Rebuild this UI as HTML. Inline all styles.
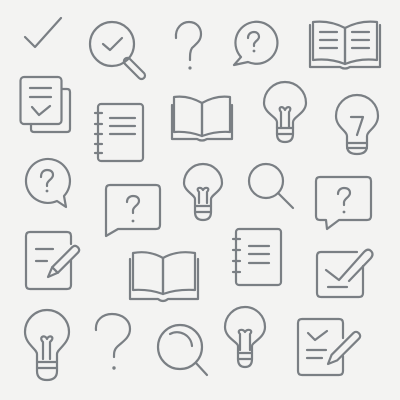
<!DOCTYPE html>
<html><head><meta charset="utf-8"><style>
html,body{margin:0;padding:0;background:#f3f3f2;}
svg{display:block}
</style></head><body>
<svg width="400" height="400" viewBox="0 0 400 400" xmlns="http://www.w3.org/2000/svg">
<rect width="400" height="400" fill="#f3f3f2"/>
<g fill="none" stroke="#7a7f84" stroke-width="2.2" stroke-linecap="round" stroke-linejoin="round">
<!-- 1 check -->
<polyline points="25,37 35,47 61,18"/>
<!-- 2 magnifier check -->
<circle cx="112" cy="44" r="22"/>
<rect x="-3" y="-3.5" width="27" height="7" rx="3.5" transform="translate(127,61) rotate(45)"/>
<polyline points="103,44 110,50 122,38"/>
<!-- 3 question -->
<path d="M176,38 C175,28 182,22 189,22 C197,22 201,28 201,34 C201,41 196,44 192,48 C190,51 190,55 190,60"/>
<!-- 4 round bubble -->
<path d="M241,57 L234,65 L248,62 A21,21 0 1 0 241,57 Z"/>
<path d="M248,38 C248,34 251,32 254,32 C257,32 259,34 259,37 C259,40 255,41 254,44 L254,46"/>
<!-- 5 book with lines -->
<path d="M345,64 V28 Q330,20 313,22 V60 Q330,58 345,64 Z"/>
<path d="M345,64 V28 Q360,20 377,22 V60 Q360,58 345,64"/>
<path d="M310,25 V67 H340 Q345,70 350,67 H380 V25"/>
<path d="M320,32 H337 M320,40 H337 M320,48 H337 M352,32 H369 M352,40 H369 M352,48 H369"/>
<!-- 6 docs check -->
<rect x="20.5" y="77" width="41" height="47" rx="3.5"/>
<path d="M62,89 H67 Q70,89 70,92 V129 Q70,132 67,132 H34 Q31,132 31,129 V124"/>
<path d="M30,88 H51 M30,97 H51"/>
<polyline points="32,107 39,115 50,106"/>
<!-- 7 notebook -->
<rect x="98" y="104" width="45" height="57" rx="3"/>
<path d="M95,113 H102 M95,124 H102 M95,134 H102 M95,144 H102 M95,153 H102"/>
<path d="M110,118 H135 M110,126 H135 M110,134 H135"/>
<!-- 8 open book -->
<path d="M202,136 V103 Q188,95 174,97 V132 Q188,131 202,136 Z"/>
<path d="M202,136 V103 Q216,95 230,97 V132 Q216,131 202,136"/>
<path d="M172,105 V139 H197 Q202,142 207,139 H232 V105"/>
<!-- 9 bulb -->
<path d="M277,127 V122 C277,117 264,113 264,103 A21,21 0 0 1 306,103 C306,113 293,117 293,122 V127"/>
<path d="M277,127 V134 Q277,142 285,142 Q293,142 293,134 V127"/>
<path d="M277,128 H293 M277,134 H293"/>
<path d="M281,127 V112 C277,107 283,105 285,110 C287,105 293,107 289,112 V127"/>
<!-- 10 bulb 7 -->
<path d="M347,140 V136 C347,131 336,127 336,116 A21,21 0 0 1 378,116 C378,127 367,131 367,136 V140"/>
<path d="M347,140 V146 Q347,154 357,154 Q367,154 367,146 V140"/>
<path d="M347,143 H367 M347,148 H367"/>
<path d="M351,117 H363 L357,135"/>
<!-- 11 round bubble ? -->
<path d="M57,201 L66,207 L64,196 A22,22 0 1 0 57,201 Z"/>
<path d="M41,177 C41,172 44,170 47,170 C51,170 53,172 53,175 C53,179 48,180 47,184 L47,186"/>
<!-- 12 rect bubble -->
<path d="M106,189 V236 L118,229 H156 Q160,229 160,225 V189 Q160,185 156,185 H110 Q106,185 106,189 Z"/>
<path d="M127,202 C127,198 130,196 133,196 C137,196 139,198 139,201 C139,205 134,206 133,210 L133,213"/>
<!-- 13 bulb -->
<path d="M195,203 V199 C195,195 184,191 184,183 A19,19 0 0 1 222,183 C222,191 211,195 211,199 V203"/>
<path d="M195,203 V212 Q195,220 203,220 Q211,220 211,212 V203"/>
<path d="M195,206 H211 M195,212 H211"/>
<path d="M199,203 V192 C195,188 201,186 203,190 C205,186 211,188 207,192 V203"/>
<!-- 14 magnifier -->
<circle cx="266" cy="181" r="17"/>
<path d="M278,193 L293,208"/>
<!-- 15 rect bubble -->
<path d="M320,177 H367 Q371,177 371,181 V216 Q371,220 367,220 H339 L327,229 L326,220 H320 Q316,220 316,216 V181 Q316,177 320,177 Z"/>
<path d="M338,194 C338,190 341,188 344,188 C348,188 350,190 350,193 C350,197 345,198 344,202 L344,205"/>
<!-- 16 note pencil -->
<path d="M71,244 V236 Q71,232 67,232 H30 Q26,232 26,236 V285 Q26,289 30,289 H67 Q71,289 71,285 V260"/>
<path d="M36,249 H53 M36,261 H47"/>
<path d="M48,277 L52.2,267.2 L72.2,247.2 Q75,244.4 77.8,247.2 Q80.6,250 77.8,252.8 L57.8,272.8 Z"/>
<path d="M52.2,267.2 L57.8,272.8"/>
<!-- 17 open book -->
<path d="M163,294 V258 Q149,250 133,253 V290 Q149,289 163,294 Z"/>
<path d="M163,294 V258 Q177,250 195,253 V290 Q177,289 163,294"/>
<path d="M130,259 V299 H158 Q163,303 168,299 H198 V259"/>
<!-- 18 notebook -->
<rect x="236" y="229" width="45" height="56" rx="3"/>
<path d="M233,239 H240 M233,250 H240 M233,261 H240 M233,272 H240"/>
<path d="M249,246 H269 M249,254 H269 M249,263 H269"/>
<!-- 19 checkbox pen -->
<path d="M363,266 V293 Q363,297 359,297 H321 Q317,297 317,293 V256 Q317,252 321,252 H357"/>
<path d="M326,270 L339,280 L364,252 Q368,248 371,251 Q374,254 371,258 L349,281"/>
<path d="M328,287 H347"/>
<!-- 20 bulb -->
<path d="M37,359 V354 C37,349 25,344 25,332 A22,22 0 0 1 69,332 C69,344 57,349 57,354 V359"/>
<path d="M37,359 V371 Q37,380 47,380 Q57,380 57,371 V359"/>
<path d="M37,362 H57 M37,368 H57"/>
<path d="M43,359 V342 C38,337 45,334 47,339 C49,334 56,337 50,342 V359"/>
<!-- 21 question -->
<path d="M96,330 C95,320 103,314 112,314 C122,314 130,320 130,329 C130,338 122,342 117,347 C114,350 114,353 114,357"/>
<!-- 22 magnifier -->
<circle cx="180" cy="347" r="22"/>
<path d="M170,334 A15,15 0 0 1 192,346"/>
<path d="M196,363 L207,375"/>
<!-- 23 bulb -->
<path d="M238,350 V346 C238,342 225,338 225,327 A20,20 0 0 1 265,327 C265,338 252,342 252,346 V350"/>
<path d="M238,350 V359 Q238,367 245,367 Q252,367 252,359 V350"/>
<path d="M238,353 H252 M238,359 H252"/>
<path d="M240,350 V334 C236,330 243,328 245,332 C247,328 254,330 250,334 V350"/>
<!-- 24 checklist pen -->
<path d="M343,338 V323 Q343,319 339,319 H302 Q298,319 298,323 V371 Q298,375 302,375 H339 Q343,375 343,371 V356"/>
<polyline points="308,333 315,340 327,331"/>
<path d="M307,350 H326 M307,358 H322"/>
<path d="M328,364 L331.6,354.8 L353.2,333.2 Q356,330.4 358.8,333.2 Q361.6,336 358.8,338.8 L337.2,360.4 Z"/>
</g>
<g fill="#7a7f84">
<circle cx="190" cy="68" r="1.6"/>
<circle cx="254" cy="51" r="1.4"/>
<circle cx="47" cy="191" r="1.4"/>
<circle cx="133" cy="221" r="1.4"/>
<circle cx="344" cy="212" r="1.4"/>
<circle cx="114" cy="368" r="1.7"/>
</g>
</svg>
</body></html>
